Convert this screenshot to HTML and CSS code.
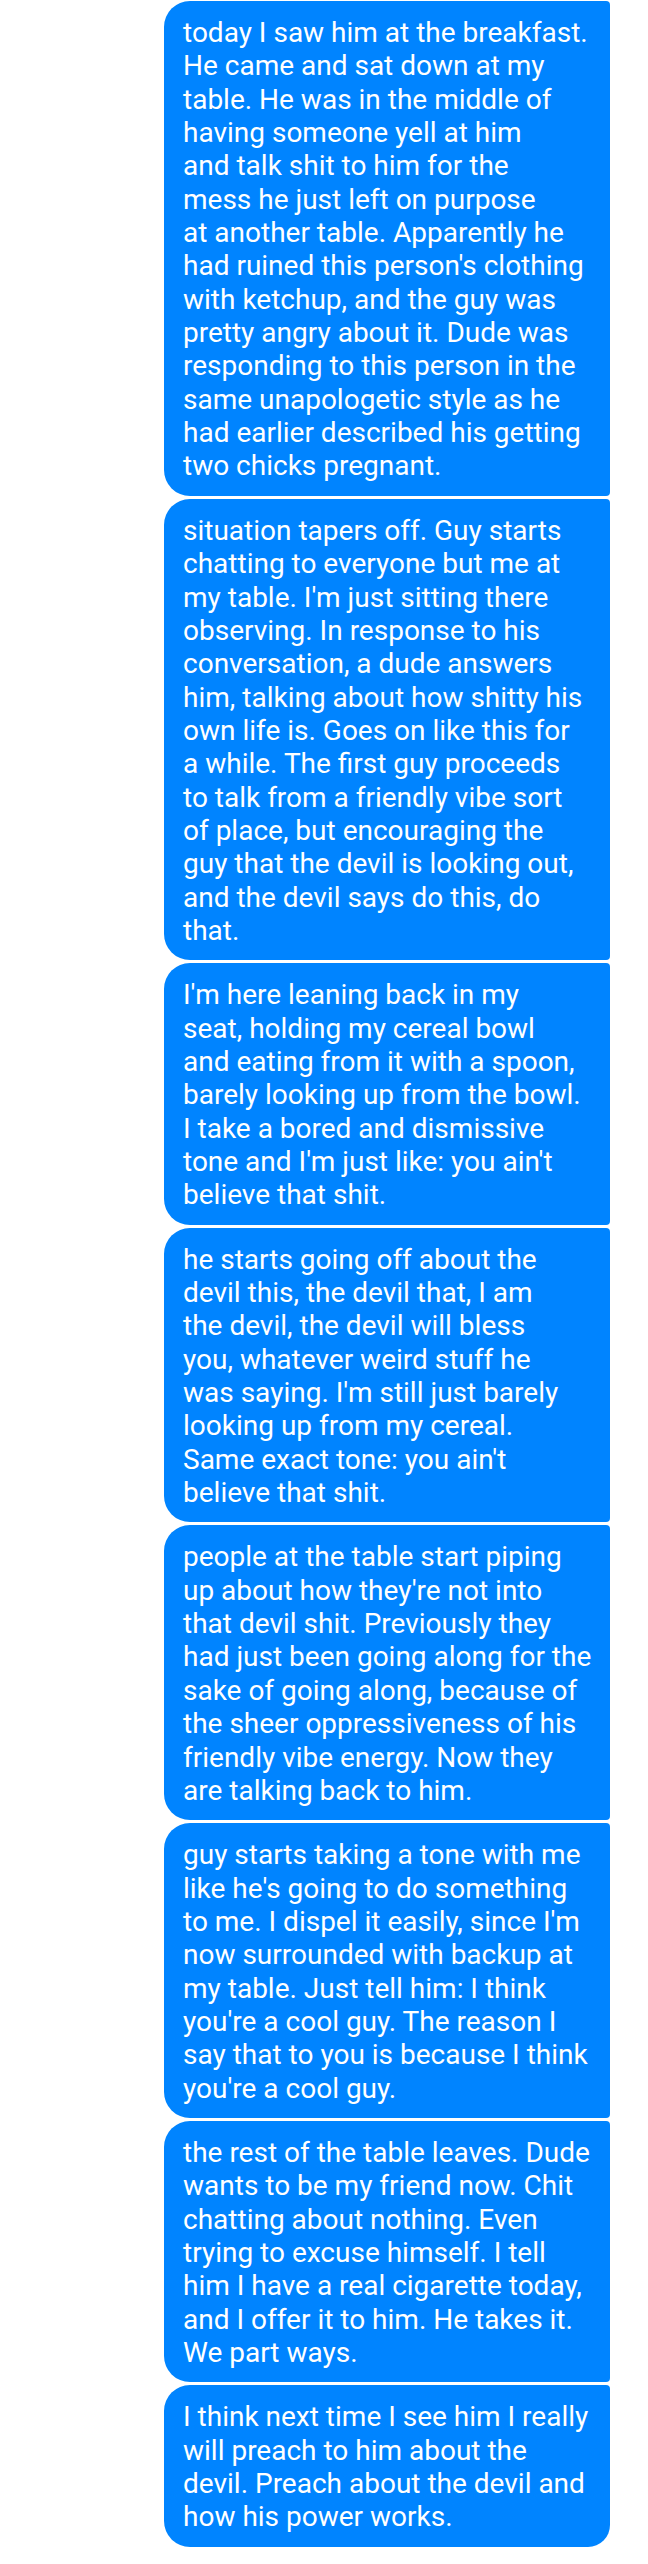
FILE: index.html
```html
<!DOCTYPE html>
<html lang="en">
<head>
<meta charset="utf-8">
<title>Messages</title>
<link rel="stylesheet" href="styles.css">
</head>
<body>
<div class="thread">
  <p class="bubble">today I saw him at the breakfast.<br>He came and sat down at my<br>table. He was in the middle of<br>having someone yell at him<br>and talk shit to him for the<br>mess he just left on purpose<br>at another table. Apparently he<br>had ruined this person's clothing<br>with ketchup, and the guy was<br>pretty angry about it. Dude was<br>responding to this person in the<br>same unapologetic style as he<br>had earlier described his getting<br>two chicks pregnant.</p>
  <p class="bubble">situation tapers off. Guy starts<br>chatting to everyone but me at<br>my table. I'm just sitting there<br>observing. In response to his<br>conversation, a dude answers<br>him, talking about how shitty his<br>own life is. Goes on like this for<br>a while. The first guy proceeds<br>to talk from a friendly vibe sort<br>of place, but encouraging the<br>guy that the devil is looking out,<br>and the devil says do this, do<br>that.</p>
  <p class="bubble">I'm here leaning back in my<br>seat, holding my cereal bowl<br>and eating from it with a spoon,<br>barely looking up from the bowl.<br>I take a bored and dismissive<br>tone and I'm just like: you ain't<br>believe that shit.</p>
  <p class="bubble">he starts going off about the<br>devil this, the devil that, I am<br>the devil, the devil will bless<br>you, whatever weird stuff he<br>was saying. I'm still just barely<br>looking up from my cereal.<br>Same exact tone: you ain't<br>believe that shit.</p>
  <p class="bubble">people at the table start piping<br>up about how they're not into<br>that devil shit. Previously they<br>had just been going along for the<br>sake of going along, because of<br>the sheer oppressiveness of his<br>friendly vibe energy. Now they<br>are talking back to him.</p>
  <p class="bubble">guy starts taking a tone with me<br>like he's going to do something<br>to me. I dispel it easily, since I'm<br>now surrounded with backup at<br>my table. Just tell him: I think<br>you're a cool guy. The reason I<br>say that to you is because I think<br>you're a cool guy.</p>
  <p class="bubble">the rest of the table leaves. Dude<br>wants to be my friend now. Chit<br>chatting about nothing. Even<br>trying to excuse himself. I tell<br>him I have a real cigarette today,<br>and I offer it to him. He takes it.<br>We part ways.</p>
  <p class="bubble last">I think next time I see him I really<br>will preach to him about the<br>devil. Preach about the devil and<br>how his power works.</p>
</div>
</body>
</html>
```
FILE: styles.css
```css
html, body {
  margin: 0;
  padding: 0;
  background: #ffffff;
}

.thread {
  display: flex;
  flex-direction: column;
  align-items: flex-end;
  gap: 3px;
  padding: 1px 38px 0 0;
}

.bubble {
  margin: 0;
  box-sizing: border-box;
  width: 446px;
  padding: 15px 10px 13px 19px;
  background: #0084ff;
  color: #ffffff;
  font-family: Roboto, "Noto Sans", sans-serif;
  font-size: 28px;
  line-height: 33.35px;
  white-space: nowrap;
  border-radius: 26px 4px 4px 26px;
}

.bubble.last {
  border-bottom-right-radius: 22px;
}
```
